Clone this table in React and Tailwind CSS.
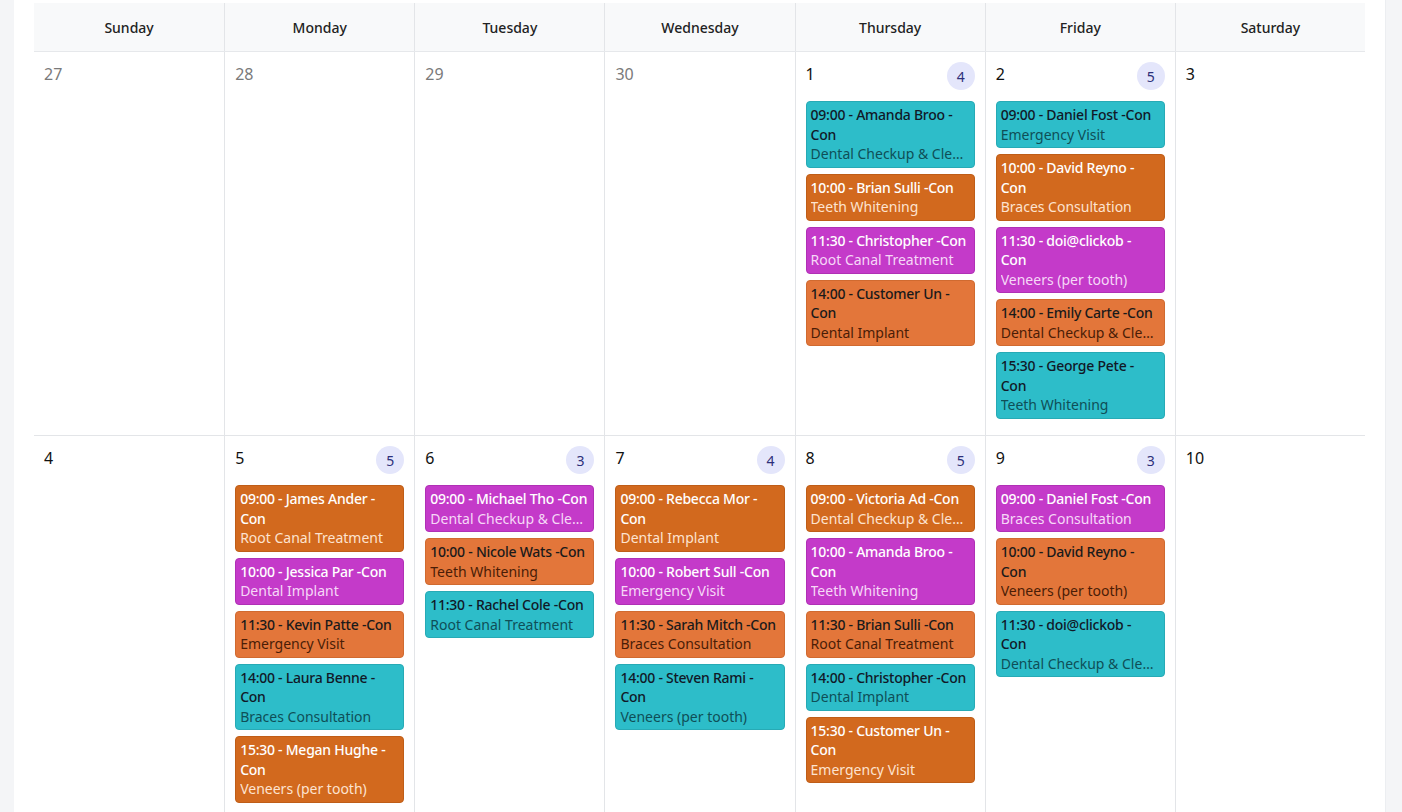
import React from "react";

const DAYS = ["Sunday", "Monday", "Tuesday", "Wednesday", "Thursday", "Friday", "Saturday"];

// colour themes for the appointment chips
const THEMES = {
  teal: { box: "bg-[#2dbdc9] border-[#27aab5]", title: "text-[#111827]", sub: "text-[#0f4f57]" },
  brown: { box: "bg-[#d2691e] border-[#bf5d17]", title: "text-white", sub: "text-[#fde3d0]" },
  pink: { box: "bg-[#c43ac9] border-[#b030b5]", title: "text-white", sub: "text-[#f6d8f7]" },
  orange: { box: "bg-[#e3763a] border-[#d06a30]", title: "text-[#1a1a1a]", sub: "text-[#4a1d07]" },
};

const weeks = [
  [
    { day: 27, muted: true },
    { day: 28, muted: true },
    { day: 29, muted: true },
    { day: 30, muted: true },
    {
      day: 1,
      events: [
        { t: ["09:00 - Amanda Broo -", "Con"], s: "Dental Checkup & Cleaning", c: "teal" },
        { t: ["10:00 - Brian Sulli -Con"], s: "Teeth Whitening", c: "brown" },
        { t: ["11:30 - Christopher -Con"], s: "Root Canal Treatment", c: "pink" },
        { t: ["14:00 - Customer Un -", "Con"], s: "Dental Implant", c: "orange" },
      ],
    },
    {
      day: 2,
      events: [
        { t: ["09:00 - Daniel Fost -Con"], s: "Emergency Visit", c: "teal" },
        { t: ["10:00 - David Reyno -", "Con"], s: "Braces Consultation", c: "brown" },
        { t: ["11:30 - doi@clickob -", "Con"], s: "Veneers (per tooth)", c: "pink" },
        { t: ["14:00 - Emily Carte -Con"], s: "Dental Checkup & Cleaning", c: "orange" },
        { t: ["15:30 - George Pete -", "Con"], s: "Teeth Whitening", c: "teal" },
      ],
    },
    { day: 3 },
  ],
  [
    { day: 4 },
    {
      day: 5,
      events: [
        { t: ["09:00 - James Ander -", "Con"], s: "Root Canal Treatment", c: "brown" },
        { t: ["10:00 - Jessica Par -Con"], s: "Dental Implant", c: "pink" },
        { t: ["11:30 - Kevin Patte -Con"], s: "Emergency Visit", c: "orange" },
        { t: ["14:00 - Laura Benne -", "Con"], s: "Braces Consultation", c: "teal" },
        { t: ["15:30 - Megan Hughe -", "Con"], s: "Veneers (per tooth)", c: "brown" },
      ],
    },
    {
      day: 6,
      events: [
        { t: ["09:00 - Michael Tho -Con"], s: "Dental Checkup & Cleaning", c: "pink" },
        { t: ["10:00 - Nicole Wats -Con"], s: "Teeth Whitening", c: "orange" },
        { t: ["11:30 - Rachel Cole -Con"], s: "Root Canal Treatment", c: "teal" },
      ],
    },
    {
      day: 7,
      events: [
        { t: ["09:00 - Rebecca Mor -", "Con"], s: "Dental Implant", c: "brown" },
        { t: ["10:00 - Robert Sull -Con"], s: "Emergency Visit", c: "pink" },
        { t: ["11:30 - Sarah Mitch -Con"], s: "Braces Consultation", c: "orange" },
        { t: ["14:00 - Steven Rami -", "Con"], s: "Veneers (per tooth)", c: "teal" },
      ],
    },
    {
      day: 8,
      events: [
        { t: ["09:00 - Victoria Ad -Con"], s: "Dental Checkup & Cleaning", c: "brown" },
        { t: ["10:00 - Amanda Broo -", "Con"], s: "Teeth Whitening", c: "pink" },
        { t: ["11:30 - Brian Sulli -Con"], s: "Root Canal Treatment", c: "orange" },
        { t: ["14:00 - Christopher -Con"], s: "Dental Implant", c: "teal" },
        { t: ["15:30 - Customer Un -", "Con"], s: "Emergency Visit", c: "brown" },
      ],
    },
    {
      day: 9,
      events: [
        { t: ["09:00 - Daniel Fost -Con"], s: "Braces Consultation", c: "pink" },
        { t: ["10:00 - David Reyno -", "Con"], s: "Veneers (per tooth)", c: "orange" },
        { t: ["11:30 - doi@clickob -", "Con"], s: "Dental Checkup & Cleaning", c: "teal" },
      ],
    },
    { day: 10 },
  ],
];

function EventChip({ ev }) {
  const th = THEMES[ev.c];
  return (
    <div className={`rounded-[4px] border px-[4px] py-[3px] text-[14px] leading-[19.5px] ${th.box}`}>
      {ev.t.map((line, i) => (
        <div key={i} className={`whitespace-nowrap font-medium tracking-[-0.25px] ${th.title}`}>
          {line}
        </div>
      ))}
      <div className={`truncate ${th.sub}`}>{ev.s}</div>
    </div>
  );
}

function DayCell({ cell, first }) {
  const events = cell.events || [];
  return (
    <div className={`min-w-0 px-[10px] pt-[10px] pb-[14px] ${first ? "" : "border-l border-[#e3e5e8]"}`}>
      <div className="flex items-start justify-between h-[28px]">
        <span className={`text-[16px] leading-[24px] ${cell.muted ? "text-[#7a7a7a]" : "text-[#111]"}`}>
          {cell.day}
        </span>
        {events.length > 0 && (
          <span className="w-[28px] h-[28px] rounded-full bg-[#e4e6fb] text-[#2d2f7a] text-[14px] flex items-center justify-center">
            {events.length}
          </span>
        )}
      </div>
      <div className="mt-[11px] flex flex-col gap-[6px]">
        {events.map((ev, i) => (
          <EventChip key={i} ev={ev} />
        ))}
      </div>
    </div>
  );
}

export default function App() {
  return (
    <div
      className="min-h-screen bg-[#f4f5f7] pl-[14px] pr-[16px] overflow-hidden"
      style={{ fontFamily: '"Noto Sans", "Open Sans", sans-serif' }}
    >
      <div className="bg-white border-r border-[#eceef1] px-[20px] pt-[3px] min-h-[812px]">
        <div className="grid grid-cols-7 bg-[#f8f9fa] border-b border-[#e6e8eb] h-[49px]">
          {DAYS.map((d, i) => (
            <div
              key={d}
              className={`flex items-center justify-center text-[14px] font-medium text-[#222] ${i ? "border-l border-[#e3e5e8]" : ""}`}
            >
              {d}
            </div>
          ))}
        </div>
        {weeks.map((week, wi) => (
          <div
            key={wi}
            className={`grid grid-cols-7 ${wi === 0 ? "h-[384px] border-b border-[#e3e5e8]" : "min-h-[400px]"}`}
          >
            {week.map((cell, ci) => (
              <DayCell key={ci} cell={cell} first={ci === 0} />
            ))}
          </div>
        ))}
      </div>
    </div>
  );
}
